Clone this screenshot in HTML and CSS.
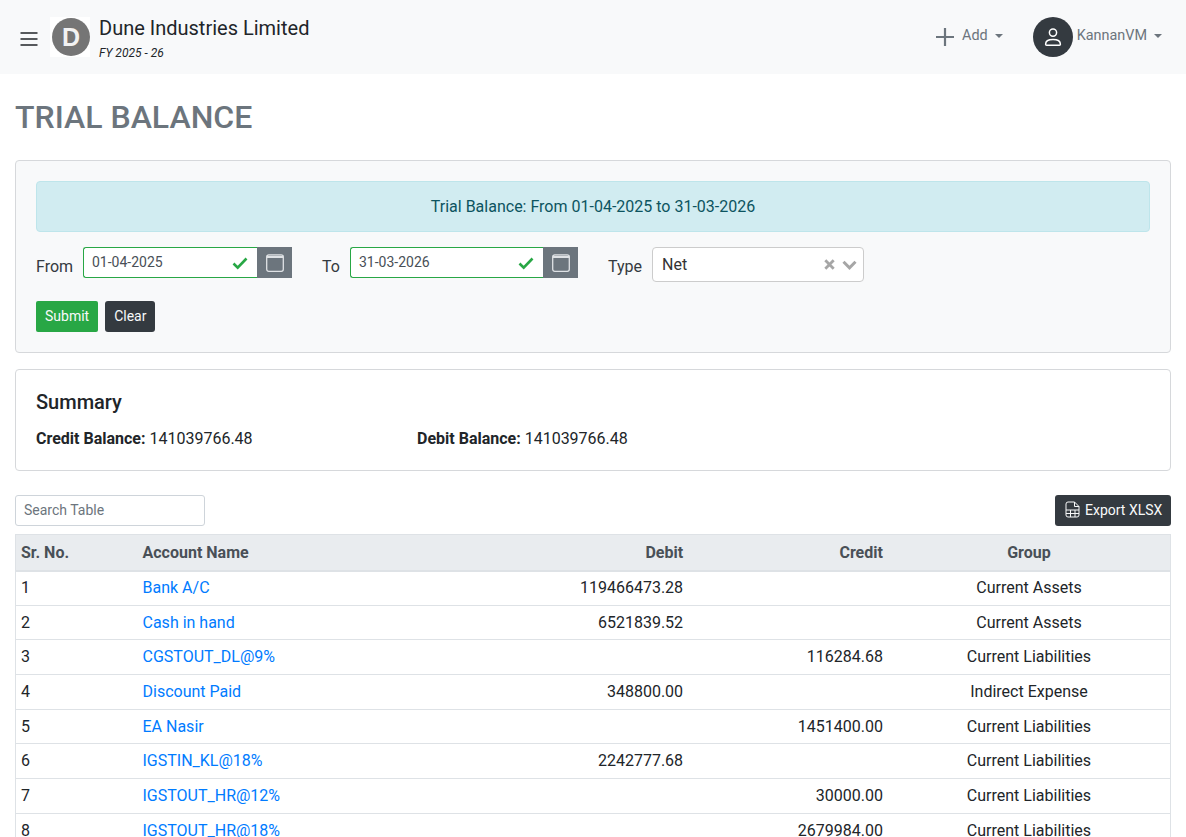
FILE: index.html
```html
<!DOCTYPE html>
<html lang="en">
<head>
    <meta charset="UTF-8">
    <meta name="viewport" content="width=device-width, initial-scale=1.0">
    <title>Trial Balance</title>
    <link rel="stylesheet" href="styles.css">
</head>
<body>
    <nav class="navbar">
        <button class="menu-btn" aria-label="Menu">
            <svg width="18" height="16" viewBox="0 0 18 16"><path d="M0.5 2h17M0.5 8h17M0.5 14h17" stroke="#212529" stroke-width="1.4" fill="none"/></svg>
        </button>
        <div class="logo-box"><span class="logo">D</span></div>
        <div class="company">
            <div class="company-name">Dune Industries Limited</div>
            <div class="company-year">FY 2025 - 26</div>
        </div>
        <div class="nav-right">
            <a class="nav-add">
                <svg width="20" height="20" viewBox="0 0 20 20"><path d="M10 1v18M1 10h18" stroke="#6c757d" stroke-width="2.2" fill="none"/></svg>
                <span class="nav-text">Add</span><i class="caret"></i>
            </a>
            <a class="nav-user">
                <span class="avatar">
                    <svg width="20" height="20" viewBox="0 0 20 20" fill="none" stroke="#fff" stroke-width="1.5"><circle cx="10" cy="5.6" r="3.6"/><path d="M2.6 17.2c0-3 2.6-4.6 7.4-4.6s7.4 1.6 7.4 4.6c0 .6-.4 1-1 1H3.6c-.6 0-1-.4-1-1z"/></svg>
                </span>
                <span class="nav-text user-name">KannanVM</span><i class="caret"></i>
            </a>
        </div>
    </nav>

    <main class="content">
        <h2 class="page-title">TRIAL BALANCE</h2>

        <section class="card filter-card">
            <div class="alert">Trial Balance: From 01-04-2025 to 31-03-2026</div>
            <form class="filter-row">
                <label class="from-label">From</label>
                <div class="date-group">
                    <div class="date-input">
                        <span>01-04-2025</span>
                        <svg width="16" height="14" viewBox="0 0 16 14"><path d="M1.5 7.5l4.2 4.2L14.5 2.5" stroke="#28a745" stroke-width="2.6" fill="none"/></svg>
                    </div>
                    <span class="date-btn">
                        <svg width="18" height="18" viewBox="0 0 18 18" fill="none" stroke="#dfe2e5" stroke-width="1.3"><rect x="0.7" y="0.9" width="16.6" height="16.4" rx="2"/><path d="M0.7 2.9h16.6" stroke-width="2.2"/></svg>
                    </span>
                </div>
                <label class="to-label">To</label>
                <div class="date-group">
                    <div class="date-input date-input-wide">
                        <span>31-03-2026</span>
                        <svg width="16" height="14" viewBox="0 0 16 14"><path d="M1.5 7.5l4.2 4.2L14.5 2.5" stroke="#28a745" stroke-width="2.6" fill="none"/></svg>
                    </div>
                    <span class="date-btn">
                        <svg width="18" height="18" viewBox="0 0 18 18" fill="none" stroke="#dfe2e5" stroke-width="1.3"><rect x="0.7" y="0.9" width="16.6" height="16.4" rx="2"/><path d="M0.7 2.9h16.6" stroke-width="2.2"/></svg>
                    </span>
                </div>
                <label class="type-label">Type</label>
                <div class="select-box">
                    <span class="select-value">Net</span>
                    <svg width="11" height="11" viewBox="0 0 11 11"><path d="M1.3 1.3l8.4 8.4M9.7 1.3L1.3 9.7" stroke="#a6a6a6" stroke-width="2.8" fill="none"/></svg>
                    <svg class="chevron" width="15" height="10" viewBox="0 0 15 10"><path d="M1.5 1.8l6 6 6-6" stroke="#a6a6a6" stroke-width="3" fill="none"/></svg>
                </div>
            </form>
            <div class="filter-actions">
                <button class="btn btn-submit">Submit</button>
                <button class="btn btn-dark">Clear</button>
            </div>
        </section>

        <section class="card summary-card">
            <h5>Summary</h5>
            <div class="summary-row">
                <div class="summary-col"><strong>Credit Balance:</strong> 141039766.48</div>
                <div><strong>Debit Balance:</strong> 141039766.48</div>
            </div>
        </section>

        <div class="table-tools">
            <input class="search" type="text" placeholder="Search Table">
            <button class="btn btn-dark btn-export">
                <svg width="15" height="17" viewBox="0 0 15 17" fill="none" stroke="#f8f9fa" stroke-width="1"><path d="M1 3a2 2 0 0 1 2-2h6.5L14 5.5V14a2 2 0 0 1-2 2H3a2 2 0 0 1-2-2z"/><path d="M9.5 1v4.5H14M1 9h13M1 12.5h13M5.5 9v7M10 9v7"/></svg>
                Export XLSX
            </button>
        </div>

        <table class="report">
            <thead>
                <tr>
                    <th class="col-sr">Sr. No.</th>
                    <th class="col-name">Account Name</th>
                    <th class="col-debit num">Debit</th>
                    <th class="col-credit num">Credit</th>
                    <th class="col-group mid">Group</th>
                </tr>
            </thead>
            <tbody>
                <tr><td>1</td><td><a>Bank A/C</a></td><td class="num">119466473.28</td><td class="num"></td><td class="mid">Current Assets</td></tr>
                <tr><td>2</td><td><a>Cash in hand</a></td><td class="num">6521839.52</td><td class="num"></td><td class="mid">Current Assets</td></tr>
                <tr><td>3</td><td><a>CGSTOUT_DL@9%</a></td><td class="num"></td><td class="num">116284.68</td><td class="mid">Current Liabilities</td></tr>
                <tr><td>4</td><td><a>Discount Paid</a></td><td class="num">348800.00</td><td class="num"></td><td class="mid">Indirect Expense</td></tr>
                <tr><td>5</td><td><a>EA Nasir</a></td><td class="num"></td><td class="num">1451400.00</td><td class="mid">Current Liabilities</td></tr>
                <tr><td>6</td><td><a>IGSTIN_KL@18%</a></td><td class="num">2242777.68</td><td class="num"></td><td class="mid">Current Liabilities</td></tr>
                <tr><td>7</td><td><a>IGSTOUT_HR@12%</a></td><td class="num"></td><td class="num">30000.00</td><td class="mid">Current Liabilities</td></tr>
                <tr><td>8</td><td><a>IGSTOUT_HR@18%</a></td><td class="num"></td><td class="num">2679984.00</td><td class="mid">Current Liabilities</td></tr>
            </tbody>
        </table>
    </main>
</body>
</html>
```

FILE: styles.css
```css
* {
    margin: 0;
    padding: 0;
    box-sizing: border-box;
}

html, body {
    height: 100vh;
    overflow: hidden;
}

body {
    font-family: Roboto, "Liberation Sans", sans-serif;
    font-size: 16px;
    line-height: 1.5;
    color: #212529;
    background: #fff;
}

/* Navbar */
.navbar {
    display: flex;
    align-items: center;
    height: 74px;
    padding: 0 24px 0 20px;
    background: #f8f9fa;
}

.menu-btn {
    display: flex;
    border: none;
    background: none;
    margin-top: 4px;
}

.logo-box {
    display: flex;
    align-items: center;
    justify-content: center;
    width: 40px;
    height: 40px;
    margin: 0 0 0 12px;
    background: #fff;
}

.logo {
    width: 38px;
    height: 38px;
    margin-left: 2px;
    border-radius: 50%;
    background: #757575;
    color: #f2f2f2;
    font-family: "Liberation Sans", sans-serif;
    font-size: 25px;
    font-weight: 700;
    line-height: 38px;
    text-align: center;
}

.company {
    margin: 4px 0 0 9px;
}

.company-name {
    font-size: 20px;
    line-height: 24px;
}

.company-year {
    margin-top: 4px;
    font-size: 12px;
    font-style: italic;
    line-height: 18px;
}

.nav-right {
    display: flex;
    align-items: center;
    margin-left: auto;
    font-size: 14.4px;
    color: #6c757d;
}

.nav-add {
    display: flex;
    align-items: center;
}

.nav-text {
    margin-bottom: 2px;
}

.nav-add span {
    margin-left: 7px;
}

.nav-user {
    display: flex;
    align-items: center;
    margin-left: 30px;
}

.avatar {
    display: flex;
    align-items: center;
    justify-content: center;
    width: 40px;
    height: 40px;
    border-radius: 50%;
    background: #343a40;
}

.user-name {
    margin-left: 4px;
}

.caret {
    display: inline-block;
    margin-left: 7px;
    margin-bottom: 2px;
    border-top: 4px solid #6c757d;
    border-left: 4px solid transparent;
    border-right: 4px solid transparent;
}

/* Page */
.content {
    padding: 0 15px;
}

.page-title {
    margin-top: 20px;
    color: #6c757d;
    font-size: 32px;
    font-weight: 500;
    line-height: 46px;
}

.card {
    border: 1px solid #d6d8db;
    border-radius: 4px;
}

.filter-card {
    height: 193px;
    margin-top: 20px;
    padding: 20px;
    background: #f8f9fa;
}

.alert {
    height: 51px;
    border: 1px solid #bee5eb;
    border-radius: 4px;
    background: #d1ecf1;
    color: #0c5460;
    line-height: 49px;
    text-align: center;
}

.filter-row {
    display: flex;
    align-items: flex-start;
    margin-top: 15px;
}

.filter-row label {
    line-height: 24px;
    margin-top: 8px;
    color: #343a40;
}

.date-group {
    display: flex;
    height: 31px;
}

.from-label {
    width: 47px;
}

.to-label {
    width: 28px;
    margin-left: 30px;
}

.type-label {
    width: 44px;
    margin-left: 30px;
}

.date-input {
    display: flex;
    align-items: center;
    justify-content: space-between;
    width: 174px;
    height: 31px;
    padding: 0 9px 0 8px;
    border: 1px solid #28a745;
    border-right: none;
    border-radius: 3px 0 0 3px;
    background: #fff;
    font-size: 14px;
    color: #495057;
}

.date-input-wide {
    width: 193px;
}

.date-btn {
    display: flex;
    align-items: center;
    justify-content: center;
    width: 35px;
    background: #6c757d;
}

.select-box {
    display: flex;
    align-items: center;
    width: 212px;
    height: 35px;
    padding: 0 6px 0 9px;
    border: 1px solid #ccc;
    border-radius: 4px;
    background: #fff;
}

.select-value {
    flex: 1;
    color: #333;
}

.chevron {
    margin-left: 7px;
}

.filter-actions {
    display: flex;
    gap: 7px;
    margin-top: 19px;
}

.btn {
    height: 31px;
    padding: 0 9px 2px;
    border: none;
    border-radius: 3px;
    color: #f8f9fa;
    font-family: inherit;
    font-size: 14px;
}

.btn-submit {
    background: #28a745;
    border-radius: 2px;
}

.btn-dark {
    background: #343a40;
}

.summary-card {
    height: 102px;
    margin-top: 16px;
    padding: 20px;
    background: #fff;
}

.summary-card h5 {
    font-size: 20px;
    font-weight: 500;
    line-height: 24px;
}

.summary-row {
    display: flex;
    margin-top: 13px;
}

.summary-col {
    width: 381px;
}

.summary-row strong {
    font-weight: 700;
}

.table-tools {
    display: flex;
    justify-content: space-between;
    margin-top: 24px;
}

.search {
    width: 190px;
    height: 31px;
    padding: 0 8px 2px;
    border: 1px solid #ced4da;
    border-radius: 3px;
    font-family: inherit;
    font-size: 14px;
}

.search::placeholder {
    color: #6c757d;
}

.btn-export {
    display: flex;
    align-items: center;
    gap: 5px;
    padding: 0 8px 2px 10px;
    width: 116px;
}

/* Table */
.report {
    width: 1156px;
    margin-top: 8px;
    border-collapse: collapse;
    table-layout: fixed;
    border: 1px solid #dee2e6;
}

.report th {
    height: 36px;
    padding: 2px 5px 0;
    background: #e9ecef;
    color: #495057;
    font-weight: 700;
    text-align: left;
    border-bottom: 2px solid #dee2e6;
}

.report td {
    height: 34.7px;
    padding: 0 5px;
    border-bottom: 1px solid #dee2e6;
}

.report a {
    color: #007bff;
}

.report .num {
    text-align: right;
}

.report .mid {
    text-align: center;
}

.col-sr {
    width: 122px;
}

.col-name {
    width: 199.6px;
}

.col-debit {
    width: 351px;
}

.col-credit {
    width: 199.8px;
}
```
